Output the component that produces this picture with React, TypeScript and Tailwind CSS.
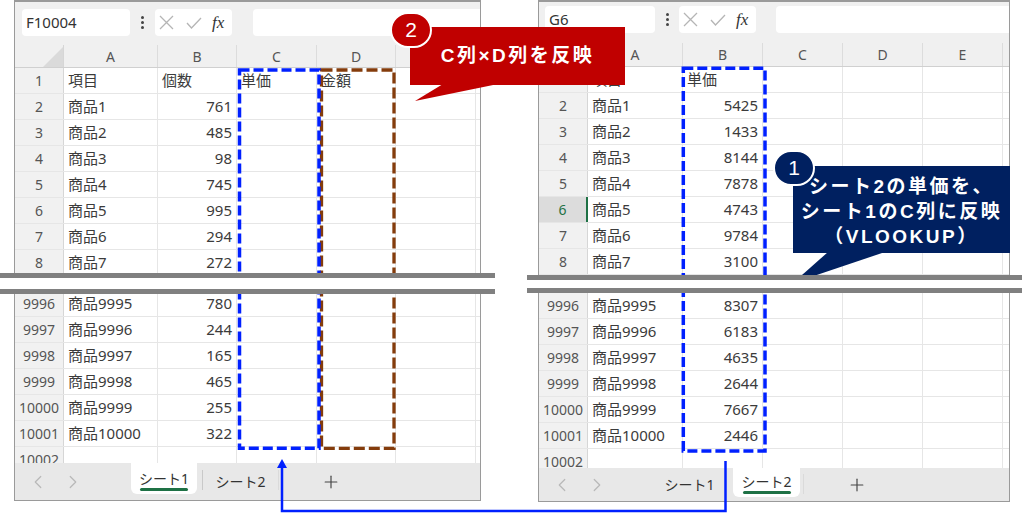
import React from 'react';
import { ChevronLeft, ChevronRight, Plus } from 'lucide-react';

type RowData = string[];

const leftTop: RowData[] = [
	['1', '項目', '個数', '単価', '金額'],
	['2', '商品1', '761'],
	['3', '商品2', '485'],
	['4', '商品3', '98'],
	['5', '商品4', '745'],
	['6', '商品5', '995'],
	['7', '商品6', '294'],
	['8', '商品7', '272'],
];
const leftBottom: RowData[] = [
	['9996', '商品9995', '780'],
	['9997', '商品9996', '244'],
	['9998', '商品9997', '165'],
	['9999', '商品9998', '465'],
	['10000', '商品9999', '255'],
	['10001', '商品10000', '322'],
];
const rightTop: RowData[] = [
	['1', '項目', '単価'],
	['2', '商品1', '5425'],
	['3', '商品2', '1433'],
	['4', '商品3', '8144'],
	['5', '商品4', '7878'],
	['6', '商品5', '4743'],
	['7', '商品6', '9784'],
	['8', '商品7', '3100'],
];
const rightBottom: RowData[] = [
	['9996', '商品9995', '8307'],
	['9997', '商品9996', '6183'],
	['9998', '商品9997', '4635'],
	['9999', '商品9998', '2644'],
	['10000', '商品9999', '7667'],
	['10001', '商品10000', '2446'],
];

const COLS = ['A', 'B', 'C', 'D', 'E'];

const Row = ({ cells, colW, sel }: { cells: RowData; colW: string[]; sel?: boolean }) => (
	<div className="flex h-[26px] shrink-0 border-b border-[#e6e6e6]">
		<div
			className={`w-[49px] shrink-0 flex items-center justify-center text-[14px] ${
				sel
					? 'bg-[#dcdcdc] text-[#1e7145] border-r-2 border-r-[#1e7145]'
					: 'bg-[#f1f1f1] text-[#555] border-r border-r-[#d6d6d6]'
			}`}
		>
			{cells[0]}
		</div>
		{colW.map((w, i) => {
			const v = cells[i + 1] ?? '';
			const num = /^\d+$/.test(v);
			return (
				<div
					key={i}
					className={`${w} shrink-0 border-r border-[#e6e6e6] flex items-center text-[15px] text-[#3b3b3b] ${
						num ? 'justify-end pr-[4px]' : 'pl-[4px]'
					}`}
				>
					{v}
				</div>
			);
		})}
		<div className="flex-1" />
	</div>
);

const Toolbar = ({ name, cls, nameW, btnMl, barMl }: { name: string; cls: string; nameW: string; btnMl: string; barMl: string }) => (
	<div className={`flex items-start bg-[#f0f0f0] shrink-0 ${cls}`}>
		<div className={`${nameW} h-[27px] bg-white rounded-[4px] flex items-center pl-[4px] text-[15px] text-[#333] relative`}>
			{name}
		</div>
		<div className="ml-[11px] h-[27px] flex flex-col justify-center gap-[2px]">
			<div className="w-[3px] h-[3px] rounded-full bg-[#444]" />
			<div className="w-[3px] h-[3px] rounded-full bg-[#444]" />
			<div className="w-[3px] h-[3px] rounded-full bg-[#444]" />
		</div>
		<div className={`${btnMl} w-[77px] h-[27px] bg-white rounded-[4px] flex items-center pl-[4px]`}>
			<svg width="15" height="15" viewBox="0 0 15 15">
				<path d="M1 1L14 14M14 1L1 14" stroke="#b5b5b5" strokeWidth="1.3" fill="none" />
			</svg>
			<svg className="ml-[12px]" width="16" height="12" viewBox="0 0 16 12">
				<path d="M1 6L5.5 11L15 1" stroke="#b5b5b5" strokeWidth="1.3" fill="none" />
			</svg>
			<span className="ml-[10px] font-[family-name:'Liberation_Serif',serif] italic text-[17px] text-[#333] leading-none">
				fx
			</span>
		</div>
		<div className={`${barMl} flex-1 h-[27px] bg-white rounded-l-[4px]`} />
	</div>
);

const ColHeader = ({ colW, h }: { colW: string[]; h: string }) => (
	<div className={`flex ${h} shrink-0 bg-[#f0f0f0] border-b border-[#d0d0d0]`}>
		<div className="w-[49px] shrink-0 border-r border-[#d6d6d6] flex items-end justify-end">
			<svg width="20" height="20" viewBox="0 0 20 20">
				<polygon points="20,0 20,20 0,20" fill="#dadada" />
			</svg>
		</div>
		{colW.map((w, i) => (
			<div key={i} className={`${w} shrink-0 border-r border-[#dcdcdc] flex items-center justify-center text-[14px] text-[#555]`}>
				{COLS[i]}
			</div>
		))}
		<div className="flex-1" />
	</div>
);

const Panel = ({
	cls,
	colW,
	toolbar,
	headH,
	top,
	bottom,
	breakCls,
	tailH,
	tabs,
	selRow,
}: {
	cls: string;
	colW: string[];
	toolbar: React.ReactNode;
	headH: string;
	top: RowData[];
	bottom: RowData[];
	breakCls: string;
	tailH: string;
	tabs: React.ReactNode;
	selRow?: string;
}) => (
	<div className={`flex flex-col border border-t-2 border-[#9a9a9a] bg-white ${cls}`}>
		{toolbar}
		<ColHeader colW={colW} h={headH} />
		{top.map((r) => (
			<Row key={r[0]} cells={r} colW={colW} sel={r[0] === selRow} />
		))}
		<div className={`relative z-10 w-[495px] shrink-0 bg-white border-y-[5px] border-[#808080] ${breakCls}`} />
		{bottom.map((r) => (
			<Row key={r[0]} cells={r} colW={colW} />
		))}
		<div className={`${tailH} shrink-0 overflow-hidden`}>
			<Row cells={['10002']} colW={colW} />
		</div>
		{tabs}
	</div>
);

const Chevrons = () => (
	<div className="w-[116px] shrink-0 h-full flex items-center pl-[12px] gap-[13px] text-[#b8b8b8]">
		<ChevronLeft size={22} strokeWidth={1.3} />
		<ChevronRight size={22} strokeWidth={1.3} />
	</div>
);

const ActiveTab = ({ label, cls }: { label: string; cls: string }) => (
	<div className={`shrink-0 bg-white rounded-b-[6px] flex flex-col items-center text-[14px] leading-[18px] text-[#333] ${cls}`}>
		<span>{label}</span>
		<div className="w-[48px] h-[3px] bg-[#1e7145] rounded-full" />
	</div>
);

const Sep = ({ cls }: { cls: string }) => <div className={`w-px h-[20px] bg-[#c9c9c9] shrink-0 ${cls}`} />;

const leftTabs = (
	<div className="flex items-start h-[37px] shrink-0 bg-[#e8e8e8]">
		<Chevrons />
		<ActiveTab label="シート1" cls="w-[66px] h-[31px] pt-[7px]" />
		<Sep cls="ml-[5px] mt-[7px]" />
		<div className="w-[75px] h-full flex items-center justify-center text-[14px] text-[#333]">シート2</div>
		<Sep cls="mt-[7px] bg-[#dadada]" />
		<div className="w-[104px] h-full flex items-center justify-center text-[#444]">
			<Plus size={20} strokeWidth={1.4} />
		</div>
	</div>
);

const rightTabs = (
	<div className="flex items-start h-[33px] shrink-0 bg-[#e8e8e8]">
		<Chevrons />
		<div className="w-[69px] h-full flex items-center justify-center text-[14px] text-[#333]">シート1</div>
		<ActiveTab label="シート2" cls="ml-[9px] w-[67px] h-[29px] pt-[5px]" />
		<Sep cls="ml-[3px] mt-[6px] bg-[#dadada]" />
		<div className="w-[106px] h-full flex items-center justify-center text-[#444]">
			<Plus size={20} strokeWidth={1.4} />
		</div>
	</div>
);

export default function App() {
	const leftW = ['w-[94px]', 'w-[79px]', 'w-[80px]', 'w-[79px]', 'w-[80px]'];
	const rightW = ['w-[95px]', 'w-[80px]', 'w-[80px]', 'w-[80px]', 'w-[80px]'];
	return (
		<div className="relative w-[1024px] h-[513px] bg-white overflow-hidden font-[family-name:'Noto_Sans','Noto_Sans_CJK_JP',sans-serif]">
			<div className="flex items-start">
				<Panel
					cls="ml-[14px] w-[467px]"
					colW={leftW}
					toolbar={<Toolbar name="F10004" cls="h-[43px] pl-[7px] pt-[7px]" nameW="w-[108px]" btnMl="ml-[11px]" barMl="ml-[21px]" />}
					headH="h-[23px]"
					top={leftTop}
					bottom={leftBottom}
					breakCls="h-[21px] -my-[3px] -ml-[15px]"
					tailH="h-[16px]"
					tabs={leftTabs}
				/>
				<Panel
					cls="ml-[57px] w-[472px]"
					colW={rightW}
					toolbar={<Toolbar name="G6" cls="h-[41px] pl-[6px] pt-[4px]" nameW="w-[110px]" btnMl="ml-[10px]" barMl="ml-[20px]" />}
					headH="h-[24px]"
					top={rightTop}
					bottom={rightBottom}
					breakCls="h-[18px] -ml-[12px]"
					tailH="h-[19px]"
					tabs={rightTabs}
					selRow="6"
				/>
			</div>

			{/* annotations */}
			<svg className="absolute inset-0 pointer-events-none" width="1024" height="513" viewBox="0 0 1024 513">
				<rect x="321.5" y="70" width="72.5" height="378.3" fill="none" stroke="#843c0c" strokeWidth="3.3" strokeDasharray="11 4" />
				<rect x="239.5" y="70" width="79.5" height="378.3" fill="none" stroke="#0020ff" strokeWidth="3.5" strokeDasharray="10 4" />
				<rect x="683.3" y="68.3" width="81.7" height="382.7" fill="none" stroke="#0020ff" strokeWidth="3.5" strokeDasharray="10 4" />
				<polyline points="282,466 282,511 725.5,511 725.5,461" fill="none" stroke="#0020ff" strokeWidth="2.5" />
				<polygon points="282,459 277,468 287,468" fill="#0020ff" />
				<polygon points="443,84 498,84 415,101" fill="#c00000" />
				<polygon points="828,252 885,252 793,283" fill="#002060" />
			</svg>

			<div className="absolute left-[410px] top-[27px] w-[215px] h-[58px] bg-[#c00000] flex items-center justify-center text-white font-bold text-[19px] tracking-[2.5px] font-[family-name:'Liberation_Sans','Noto_Sans_CJK_JP',sans-serif]">
				C列×D列を反映
			</div>
			<div className="absolute left-[390px] top-[12px] w-[42px] h-[36px] rounded-full bg-[#c00000] border-2 border-white flex items-center justify-center text-white text-[21px] font-[family-name:'Liberation_Sans',sans-serif]">
				2
			</div>

			<div className="absolute left-[793px] top-[166px] w-[217px] h-[87px] bg-[#002060] flex flex-col items-center justify-center pt-[4px] text-white font-bold text-[19px] leading-[25px] tracking-[2.5px] font-[family-name:'Liberation_Sans','Noto_Sans_CJK_JP',sans-serif]">
				<span>シート2の単価を、</span>
				<span>シート1のC列に反映</span>
				<span>（VLOOKUP）</span>
			</div>
			<div className="absolute left-[773px] top-[150px] w-[42px] h-[36px] rounded-full bg-[#002060] border-2 border-white flex items-center justify-center text-white text-[21px] font-[family-name:'Liberation_Sans',sans-serif]">
				1
			</div>
		</div>
	);
}
